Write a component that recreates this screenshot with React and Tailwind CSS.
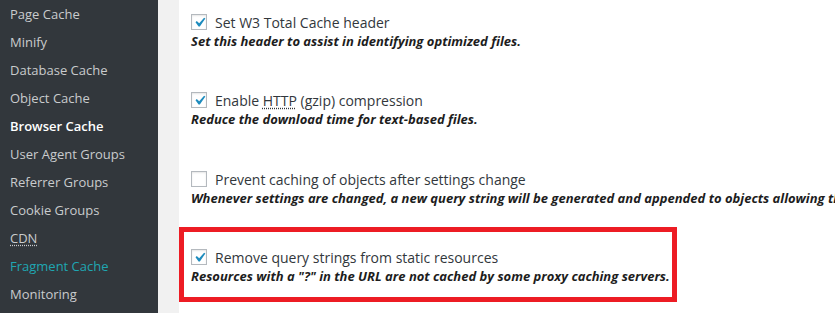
import React from "react";

const menu = [
  { label: "Page Cache" },
  { label: "Minify" },
  { label: "Database Cache" },
  { label: "Object Cache" },
  { label: "Browser Cache", current: true },
  { label: "User Agent Groups" },
  { label: "Referrer Groups" },
  { label: "Cookie Groups" },
  { label: "CDN", abbr: true },
  { label: "Fragment Cache", highlight: true },
  { label: "Monitoring" },
];

const Checkbox = ({ checked }) => (
  <span className="relative inline-block h-4 w-4 shrink-0 border border-[#b4b9be] bg-white shadow-[inset_0_1px_2px_rgba(0,0,0,0.1)]">
    {checked && (
      <svg
        className="absolute -left-[2px] -top-[2px] h-[19px] w-[19px]"
        viewBox="0 0 20 20"
        fill="#1e8cbe"
      >
        <path d="M14.83 4.89l1.34.94-5.81 8.38H9.02L5.78 9.67l1.34-1.25 2.57 2.4z" />
      </svg>
    )}
  </span>
);

const Option = ({ checked, label, desc, className }) => (
  <div className={className}>
    <div className="flex h-5 items-center">
      <Checkbox checked={checked} />
      <span className="ml-2 text-[14px] text-[#32373c]">{label}</span>
    </div>
    <p className="whitespace-nowrap text-[13px] font-bold italic leading-[18px] text-[#1d1d1d]">
      {desc}
    </p>
  </div>
);

const App = () => {
  return (
    <div
      className="flex h-[313px] w-[835px] overflow-hidden bg-white"
      style={{ fontFamily: '"Open Sans", "Noto Sans", sans-serif' }}
    >
      <div className="flex w-[158px] shrink-0 flex-col bg-[#32373c]">
        {menu.map((item) => (
          <div
            key={item.label}
            className={
              "h-7 pl-[10px] text-[13px] leading-[28px] " +
              (item.current
                ? "font-semibold text-white"
                : item.highlight
                ? "text-[#1fa6b2]"
                : "text-[#c9cbcd]")
            }
          >
            {item.abbr ? (
              <span className="underline decoration-dotted underline-offset-2">
                {item.label}
              </span>
            ) : (
              item.label
            )}
          </div>
        ))}
      </div>

      <div className="w-[21px] shrink-0 bg-[#f1f1f1]" />

      <div className="min-w-0 flex-1 overflow-hidden pt-3">
        <Option
          className="h-[78px] pl-3"
          checked
          label="Set W3 Total Cache header"
          desc="Set this header to assist in identifying optimized files."
        />
        <Option
          className="h-[79px] pl-3"
          checked
          label={
            <>
              Enable{" "}
              <span className="underline decoration-dotted underline-offset-2">
                HTTP
              </span>{" "}
              (gzip) compression
            </>
          }
          desc="Reduce the download time for text-based files."
        />
        <Option
          className="h-[58px] pl-3"
          label="Prevent caching of objects after settings change"
          desc="Whenever settings are changed, a new query string will be generated and appended to objects allowing the new policy to be applied."
        />
        <div className="w-[498px] border-[5px] border-[#ed1c24] pb-3 pl-[7px] pt-[15px]">
          <Option
            checked
            label="Remove query strings from static resources"
            desc={'Resources with a "?" in the URL are not cached by some proxy caching servers.'}
          />
        </div>
      </div>
    </div>
  );
};

export default App;
